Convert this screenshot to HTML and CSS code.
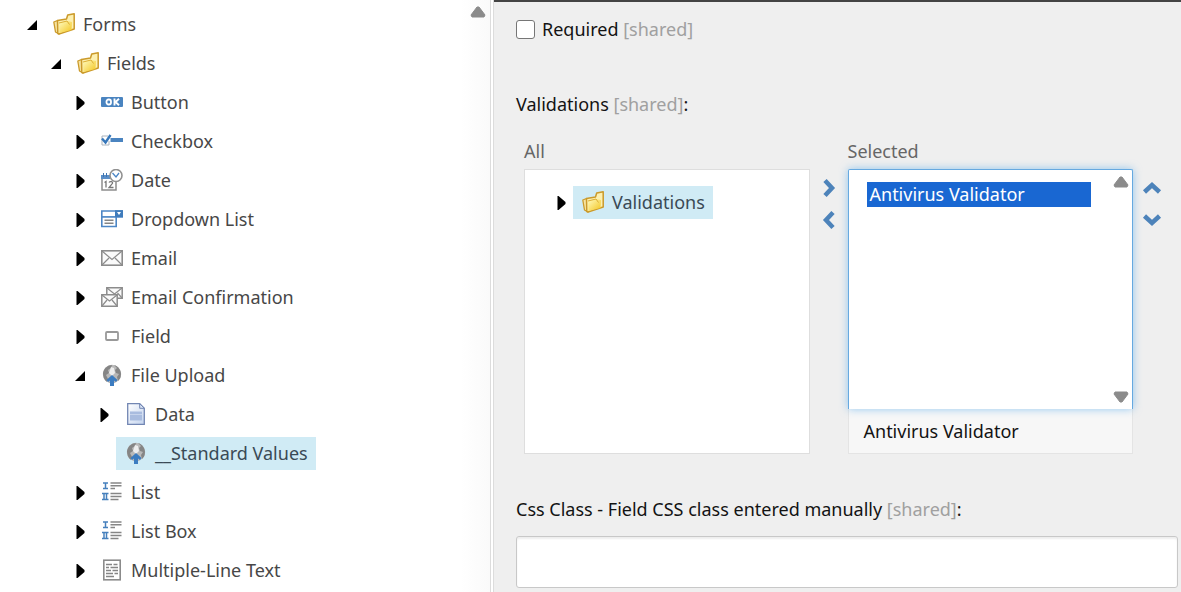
FILE: index.html
```html
<!DOCTYPE html>
<html lang="en">
<head>
<meta charset="utf-8">
<meta name="viewport" content="width=device-width, initial-scale=1.0">
<title>Content Editor</title>
<link rel="stylesheet" href="styles.css">
</head>
<body>

<!-- Shared icons -->
<svg class="sprite" aria-hidden="true">
    <defs>
        <linearGradient id="gold" x1="0" y1="0" x2="1" y2="1">
            <stop offset="0" stop-color="#fffbc0"/>
            <stop offset="1" stop-color="#f3c51e"/>
        </linearGradient>
        <linearGradient id="paper" x1="0" y1="0" x2="1" y2="1">
            <stop offset="0" stop-color="#ffffff"/>
            <stop offset="1" stop-color="#c3d3ee"/>
        </linearGradient>
    </defs>
    <symbol id="open" viewBox="0 0 24 24"><path d="M17 7v10H7z"/></symbol>
    <symbol id="closed" viewBox="0 0 24 24"><path d="M8.500 5h1l7 6v2l-7 6h-1z"/></symbol>
    <symbol id="folder" viewBox="0 0 22 22">
        <path d="M.8 9l3.700-1.500L6 21l-3.500-2z" fill="#f6e3a0" stroke="#cb9a2a" stroke-width="1.300" stroke-linejoin="round"/>
        <path d="M4.800 20.500L4.500 7.500l9-1.500 1.200-4 6.500-1.200V16L6 21z" fill="#fdf0b0" stroke="#cb9a2a" stroke-width="1.500" stroke-linejoin="round"/>
        <path d="M6 10l8.500-2L19 9l-.5 8L6.500 20z" fill="url(#gold)"/>
        <path d="M6 10l8-2 2.500 3.500" fill="none" stroke="#dcae33"/>
    </symbol>
    <symbol id="button" viewBox="0 0 22 22">
        <rect y="6" width="22" height="10" rx="1" fill="#4a84c0"/>
        <rect x="5.500" y="8.500" width="4.500" height="5" rx="2" fill="none" stroke="#fff" stroke-width="1.800"/>
        <path d="M13.500 7.600v6.800M18 7.800L14.500 11l3.500 3.200" fill="none" stroke="#fff" stroke-width="1.900"/>
    </symbol>
    <symbol id="checkbox" viewBox="0 0 22 22">
        <path d="M7 6H1v9h7v-4" fill="none" stroke="#aab3bd"/>
        <path d="M1 8.500l3.500 4L9.500 5" fill="none" stroke="#3677ba" stroke-width="2.400"/>
        <rect x="9.500" y="8" width="12.500" height="4" fill="#4a84c0"/>
    </symbol>
    <symbol id="date" viewBox="0 0 22 22">
        <path d="M1 8v13h14V12" fill="#fff" stroke="#8d8d8d" stroke-width="1.500"/>
        <path d="M0 6h9v4H0z" fill="#5b8fc8"/>
        <path d="M2.500 4v4M5.500 4v4" stroke="#3f76b2"/>
        <path d="M3.500 13.500l1.500-1v6M8 13.500c1-1.500 4-1 3.500.8L8 18.500h4.500" fill="none" stroke="#777" stroke-width="1.300"/>
        <circle cx="15" cy="6.500" r="6" fill="#fff" stroke="#919191" stroke-width="1.600"/>
        <path d="M11.500 4l3.500 4 3-4" fill="none" stroke="#4b86c6" stroke-width="1.300"/>
    </symbol>
    <symbol id="dropdown" viewBox="0 0 22 22">
        <path d="M.8 3h20.400v6H.8z" fill="#fff" stroke="#4d86c5" stroke-width="1.600"/>
        <path d="M.8 9h14.400v9.500H.8z" fill="#fff" stroke="#4d86c5" stroke-width="1.600"/>
        <path d="M14 2.200h8V9h-8z" fill="#3f7cbc"/>
        <path d="M16 4h4l-2 3z" fill="#fff"/>
        <path d="M3.500 12.200h9M3.500 15.200h9" stroke="#858585" stroke-width="1.400"/>
    </symbol>
    <symbol id="email" viewBox="0 0 22 22">
        <rect x=".8" y="3.800" width="20.400" height="14.400" fill="#fafafa" stroke="#8c8c8c" stroke-width="1.600"/>
        <path d="M1 4l10 8.500L21 4M1 18l7-7M21 18l-7-7" fill="none" stroke="#8c8c8c" stroke-width="1.200"/>
    </symbol>
    <symbol id="emails" viewBox="0 0 22 22">
        <path d="M5.800 1.800h15.400v10.400H5.800z" fill="#fafafa" stroke="#8c8c8c" stroke-width="1.500"/>
        <path d="M6 2l7.500 6L21 2M21 12l-4.500-5" fill="none" stroke="#8c8c8c" stroke-width="1.200"/>
        <path d="M.8 8.800h15.400v11.400H.8z" fill="#fafafa" stroke="#8c8c8c" stroke-width="1.500"/>
        <path d="M1 9l7.500 6L16 9M1 20l5-6M16 20l-5-6" fill="none" stroke="#8c8c8c" stroke-width="1.200"/>
    </symbol>
    <symbol id="field" viewBox="0 0 22 22">
        <rect x="5" y="7" width="12" height="8" rx="1" fill="#fff" stroke="#999" stroke-width="1.800"/>
    </symbol>
    <symbol id="upload" viewBox="0 0 22 22">
        <circle cx="11" cy="10" r="9.200" fill="#b9b9b9"/>
        <path d="M2 9C3 4 7 1 11 1l-1 3-3 2 1 3-3 2 2 4-1 3C3 16 2 12 2 9zM13 1c4 1 7 5 7 9 0 4-2 6-3 7l-1-4 2-3-3-1-1-3 2-2z" fill="#858585"/>
        <path d="M10 3l3 1 1 5-3 3-3-3z" fill="#eee"/>
        <path d="M11 11l5.500 5-1.500 2-2-1.500V22H9v-5.500L7 18l-1.500-2z" fill="#3c7cc0"/>
    </symbol>
    <symbol id="document" viewBox="0 0 22 22">
        <path d="M2.700.7h12l4.600 4.600v16H2.700z" fill="url(#paper)" stroke="#7286b3" stroke-width="1.300"/>
        <path d="M14.700.7v4.600h4.600z" fill="#dce6f6" stroke="#7286b3"/>
        <path d="M5 8.500h12v9H5z" fill="#a9bcdf"/>
        <path d="M5 8.500h12M5 11.500h12" stroke="#c7d4ec"/>
    </symbol>
    <symbol id="list" viewBox="0 0 22 22">
        <path d="M2 2h5M2 7.500h5M4.500 2v5.500M1 12.500h6.500M1 18.500h6.500M3 12.500v6M5.500 12.500v6" stroke="#4680bd" stroke-width="1.500"/>
        <path d="M9.500 2h11M9.500 4.800h11M9.500 7.600H14M9.500 12.500h11M9.500 15.500h11M9.500 18.500h8" stroke="#868686" stroke-width="1.500"/>
    </symbol>
    <symbol id="multiline" viewBox="0 0 22 22">
        <rect x="2.800" y="1.200" width="16.400" height="19.600" fill="#fff" stroke="#8b8b8b" stroke-width="1.600"/>
        <path d="M5 5.500h6M12.500 5.500h4M5 8.500h3M9.500 8.500h7.500M5 11.500h5M11.500 11.500h5.500M5 14.500h7M13.500 14.500H17M5 17.500h8" stroke="#858585" stroke-width="1.300"/>
    </symbol>
    <symbol id="chevron" viewBox="0 0 20 20">
        <path d="M6 2.500l7 7.500-7 7.500" fill="none" stroke="#4d83ba" stroke-width="4.500"/>
    </symbol>
    <symbol id="scroll" viewBox="0 0 16 12">
        <path d="M7 1h2l6 8-1 2H2L1 9z" fill="#8b8b8b" stroke="#8b8b8b" stroke-linejoin="round"/>
    </symbol>
</svg>

<div class="editor">
    <nav class="sidebar" aria-label="Content tree">
        <ul class="tree">
            <li>
                <div class="row"><button class="toggle" aria-label="Collapse Forms"><svg><use href="#open"/></svg></button><a class="node" href="#"><svg class="icon"><use href="#folder"/></svg>Forms</a></div>
                <ul>
                    <li>
                        <div class="row"><button class="toggle" aria-label="Collapse Fields"><svg><use href="#open"/></svg></button><a class="node" href="#"><svg class="icon"><use href="#folder"/></svg>Fields</a></div>
                        <ul>
                            <li class="row"><button class="toggle" aria-label="Expand Button"><svg><use href="#closed"/></svg></button><a class="node" href="#"><svg class="icon"><use href="#button"/></svg>Button</a></li>
                            <li class="row"><button class="toggle" aria-label="Expand Checkbox"><svg><use href="#closed"/></svg></button><a class="node" href="#"><svg class="icon"><use href="#checkbox"/></svg>Checkbox</a></li>
                            <li class="row"><button class="toggle" aria-label="Expand Date"><svg><use href="#closed"/></svg></button><a class="node" href="#"><svg class="icon"><use href="#date"/></svg>Date</a></li>
                            <li class="row"><button class="toggle" aria-label="Expand Dropdown List"><svg><use href="#closed"/></svg></button><a class="node" href="#"><svg class="icon"><use href="#dropdown"/></svg>Dropdown List</a></li>
                            <li class="row"><button class="toggle" aria-label="Expand Email"><svg><use href="#closed"/></svg></button><a class="node" href="#"><svg class="icon"><use href="#email"/></svg>Email</a></li>
                            <li class="row"><button class="toggle" aria-label="Expand Email Confirmation"><svg><use href="#closed"/></svg></button><a class="node" href="#"><svg class="icon"><use href="#emails"/></svg>Email Confirmation</a></li>
                            <li class="row"><button class="toggle" aria-label="Expand Field"><svg><use href="#closed"/></svg></button><a class="node" href="#"><svg class="icon"><use href="#field"/></svg>Field</a></li>
                            <li>
                                <div class="row"><button class="toggle" aria-label="Collapse File Upload"><svg><use href="#open"/></svg></button><a class="node" href="#"><svg class="icon"><use href="#upload"/></svg>File Upload</a></div>
                                <ul>
                                    <li class="row"><button class="toggle" aria-label="Expand Data"><svg><use href="#closed"/></svg></button><a class="node" href="#"><svg class="icon"><use href="#document"/></svg>Data</a></li>
                                    <li class="row leaf"><a class="node active" href="#"><svg class="icon"><use href="#upload"/></svg>__Standard Values</a></li>
                                </ul>
                            </li>
                            <li class="row"><button class="toggle" aria-label="Expand List"><svg><use href="#closed"/></svg></button><a class="node" href="#"><svg class="icon"><use href="#list"/></svg>List</a></li>
                            <li class="row"><button class="toggle" aria-label="Expand List Box"><svg><use href="#closed"/></svg></button><a class="node" href="#"><svg class="icon"><use href="#list"/></svg>List Box</a></li>
                            <li class="row"><button class="toggle" aria-label="Expand Multiple-Line Text"><svg><use href="#closed"/></svg></button><a class="node" href="#"><svg class="icon"><use href="#multiline"/></svg>Multiple-Line Text</a></li>
                        </ul>
                    </li>
                </ul>
            </li>
        </ul>
        <svg class="scroll-arrow"><use href="#scroll"/></svg>
    </nav>

    <main class="fields">
        <div class="check-field">
            <input type="checkbox" id="required">
            <label for="required">Required <span class="shared">[shared]</span></label>
        </div>

        <div class="field-title">Validations <span class="shared">[shared]</span>:</div>
        <div class="picker">
            <div class="column">
                <div class="caption">All</div>
                <div class="box">
                    <div class="row"><button class="toggle" aria-label="Expand Validations"><svg><use href="#closed"/></svg></button><a class="node active" href="#"><svg class="icon"><use href="#folder"/></svg>Validations</a></div>
                </div>
            </div>
            <div class="moves">
                <button class="move" aria-label="Add"><svg><use href="#chevron"/></svg></button>
                <button class="move left" aria-label="Remove"><svg><use href="#chevron"/></svg></button>
            </div>
            <div class="column">
                <label class="caption" for="selected">Selected</label>
                <div class="list-wrap">
                    <select id="selected" class="list" size="8" multiple>
                        <option selected>Antivirus Validator</option>
                    </select>
                    <svg class="scroll-arrow"><use href="#scroll"/></svg>
                    <svg class="scroll-arrow down"><use href="#scroll"/></svg>
                </div>
                <div class="help">Antivirus Validator</div>
            </div>
            <div class="moves">
                <button class="move up" aria-label="Move up"><svg><use href="#chevron"/></svg></button>
                <button class="move down" aria-label="Move down"><svg><use href="#chevron"/></svg></button>
            </div>
        </div>

        <label class="field-title" for="cssClass">Css Class - Field CSS class entered manually <span class="shared">[shared]</span>:</label>
        <input class="text-input" type="text" id="cssClass">
    </main>
</div>

</body>
</html>
```
FILE: styles.css
```css
* {
    box-sizing: border-box;
}
body {
    margin: 0;
    font-family: "Noto Sans", "Open Sans", sans-serif;
    font-size: 18px;
    line-height: 26px;
    color: #131313;
    background: #efefef;
}
ul {
    list-style: none;
    margin: 0;
    padding: 0;
}
button {
    border: none;
    padding: 0;
    background: none;
    cursor: pointer;
}
.sprite {
    position: absolute;
    width: 0;
    height: 0;
}
.editor {
    display: grid;
    grid-template-columns: 494px 1fr;
    height: 100vh;
    overflow: hidden;
}

/* Content tree */
.sidebar {
    position: relative;
    background: linear-gradient(to right, #fff 94%, #fafafa);
    border-right: 4px double #dcdcdc;
    overflow: hidden;
}
.tree {
    padding: 5px 0 0 20px;
}
.tree ul {
    padding-left: 24px;
}
.row {
    display: flex;
    align-items: center;
    height: 39px;
}
.leaf {
    padding-left: 24px;
}
.toggle, .toggle svg {
    display: block;
    width: 24px;
    height: 24px;
}
.node {
    display: flex;
    align-items: center;
    gap: 8px;
    height: 33px;
    padding: 0 8px 2px 9px;
    color: #474747;
    text-decoration: none;
    white-space: nowrap;
}
.node.active {
    background: #d0ebf5;
    color: #3a4a55;
}
.icon {
    width: 22px;
    height: 22px;
}
.scroll-arrow {
    position: absolute;
    top: 6px;
    right: 4px;
    width: 16px;
    height: 12px;
}

/* Field editor */
.fields {
    border-top: 2px solid #444;
    padding: 14px 3px 0 22px;
}
.check-field {
    display: flex;
    align-items: center;
    gap: 7px;
    margin-bottom: 49px;
}
.check-field input {
    appearance: none;
    width: 19px;
    height: 19px;
    margin: 0;
    border: 1px solid #767676;
    border-radius: 3px;
    background: #fff;
}
.field-title {
    display: block;
}
.shared {
    color: #a0a0a0;
}
.picker {
    display: grid;
    grid-template-columns: 1fr 38px 1fr 38px;
    margin: 21px 7px 42px 8px;
}
.caption {
    display: block;
    height: 31px;
    color: #666;
}
.box {
    height: 285px;
    padding: 13px 24px;
    background: #fff;
    border: 1px solid #dedede;
}
.list-wrap {
    position: relative;
    height: 240px;
}
.list {
    display: block;
    width: 100%;
    height: 100%;
    padding: 12px 41px 0 18px;
    border: 1px solid #66a9e0;
    border-bottom: none;
    border-radius: 2px 2px 0 0;
    background: #fff;
    box-shadow: 0 0 8px rgba(82, 168, 236, 0.6);
    font: inherit;
    outline: none;
    overflow: hidden;
}
.list option {
    height: 25px;
    min-height: 25px;
    padding: 0 3px;
    line-height: 25px;
}
.list option:checked {
    background: #1967d2 linear-gradient(#1967d2, #1967d2);
    color: #fff;
}
.list-wrap .scroll-arrow {
    top: 7px;
}
.list-wrap .scroll-arrow.down {
    top: auto;
    bottom: 6px;
    transform: rotate(180deg);
}
.help {
    height: 45px;
    padding: 9px 15px;
    background: #f7f7f7;
    border: 1px solid #e4e4e4;
    border-top: none;
}
.moves {
    display: flex;
    flex-direction: column;
    align-items: center;
    gap: 12px;
    padding-top: 40px;
}
.move, .move svg {
    display: block;
    width: 20px;
    height: 20px;
}
.move.left {
    transform: rotate(180deg);
}
.move.up {
    transform: rotate(-90deg);
}
.move.down {
    transform: rotate(90deg);
}
.text-input {
    display: block;
    width: 100%;
    height: 52px;
    margin-top: 14px;
    padding: 0 12px;
    border: 1px solid #c8c8c8;
    border-radius: 3px;
    box-shadow: inset 0 2px 2px #eee;
    font: inherit;
}
```
